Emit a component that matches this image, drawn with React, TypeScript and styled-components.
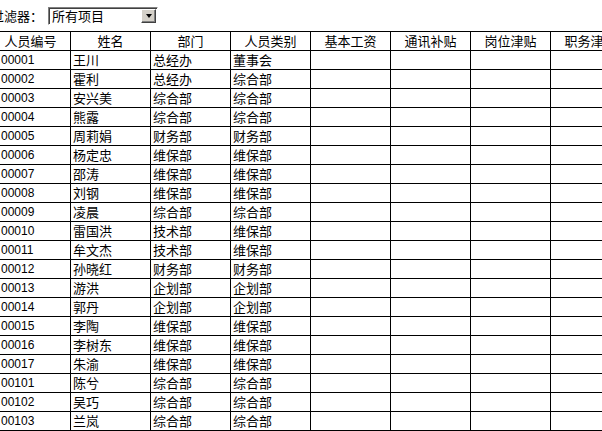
import React from "react";
import styled, { createGlobalStyle } from "styled-components";

const Global = createGlobalStyle`
  html, body { margin: 0; padding: 0; background: #fff; overflow: hidden; }
  body { font-family: "Noto Sans CJK SC", "Liberation Sans", sans-serif; font-size: 13px; color: #000; }
`;

const Page = styled.div`
  margin-left: -10px;
  width: 700px;
`;

const FilterBar = styled.div`
  display: flex;
  align-items: center;
  height: 31px;
  padding-left: 1px;
  gap: 5px;
`;

const Label = styled.span`
  font-size: 13px;
  line-height: 18px;
  letter-spacing: 0;
`;

const Select = styled.div`
  box-sizing: border-box;
  width: 110px;
  height: 18px;
  display: flex;
  align-items: center;
  justify-content: space-between;
  border: 1px solid;
  border-color: #808080 #fff #fff #808080;
  box-shadow: inset 1px 1px 0 #404040;
  background: #fff;
  padding: 1px 1px 1px 3px;
`;

const SelectText = styled.span`
  font-size: 13px;
  line-height: 14px;
`;

const DropButton = styled.div`
  box-sizing: border-box;
  width: 15px;
  height: 14px;
  background: #d4d0c8;
  border: 1px solid;
  border-color: #fff #404040 #404040 #fff;
  box-shadow: inset -1px -1px 0 #808080;
  display: flex;
  align-items: center;
  justify-content: center;
`;

const Arrow = styled.span`
  width: 0;
  height: 0;
  border-left: 3.5px solid transparent;
  border-right: 3.5px solid transparent;
  border-top: 4px solid #000;
  margin-top: 1px;
`;

const Table = styled.table`
  border-collapse: collapse;
  table-layout: fixed;
  width: 720px;
`;

const Th = styled.th`
  width: 79px;
  height: 18px;
  padding: 0;
  border: 1px solid #000;
  font-weight: normal;
  font-size: 13px;
  line-height: 18px;
  text-align: center;
  white-space: nowrap;
  overflow: hidden;
`;

const Td = styled.td<{ $id?: boolean }>`
  height: 18px;
  padding: 0 0 0 ${(p) => (p.$id ? "10px" : "2px")};
  border: 1px solid #000;
  font-family: ${(p) => (p.$id ? `"Liberation Sans", sans-serif` : `"Noto Sans CJK SC", sans-serif`)};
  font-size: ${(p) => (p.$id ? "12px" : "13px")};
  line-height: 18px;
  text-align: left;
  white-space: nowrap;
  overflow: hidden;
`;

const headers = ["人员编号", "姓名", "部门", "人员类别", "基本工资", "通讯补贴", "岗位津贴", "职务津贴", "其他"];

const rows: [string, string, string, string][] = [
  ["00001", "王川", "总经办", "董事会"],
  ["00002", "霍利", "总经办", "综合部"],
  ["00003", "安兴美", "综合部", "综合部"],
  ["00004", "熊露", "综合部", "综合部"],
  ["00005", "周莉娟", "财务部", "财务部"],
  ["00006", "杨定忠", "维保部", "维保部"],
  ["00007", "邵涛", "维保部", "维保部"],
  ["00008", "刘钢", "维保部", "维保部"],
  ["00009", "凌晨", "综合部", "综合部"],
  ["00010", "雷国洪", "技术部", "维保部"],
  ["00011", "牟文杰", "技术部", "维保部"],
  ["00012", "孙晓红", "财务部", "财务部"],
  ["00013", "游洪", "企划部", "企划部"],
  ["00014", "郭丹", "企划部", "企划部"],
  ["00015", "李陶", "维保部", "维保部"],
  ["00016", "李树东", "维保部", "维保部"],
  ["00017", "朱渝", "维保部", "维保部"],
  ["00101", "陈兮", "综合部", "综合部"],
  ["00102", "吴巧", "综合部", "综合部"],
  ["00103", "兰岚", "综合部", "综合部"],
];

export default function App() {
  return (
    <>
      <Global />
      <Page>
        <FilterBar>
          <Label>过滤器：</Label>
          <Select>
            <SelectText>所有项目</SelectText>
            <DropButton>
              <Arrow />
            </DropButton>
          </Select>
        </FilterBar>
        <Table>
          <thead>
            <tr>
              {headers.map((h) => (
                <Th key={h}>{h}</Th>
              ))}
            </tr>
          </thead>
          <tbody>
            {rows.map((r) => (
              <tr key={r[0]}>
                <Td $id>{r[0]}</Td>
                <Td>{r[1]}</Td>
                <Td>{r[2]}</Td>
                <Td>{r[3]}</Td>
                {headers.slice(4).map((h) => (
                  <Td key={h} />
                ))}
              </tr>
            ))}
          </tbody>
        </Table>
      </Page>
    </>
  );
}
